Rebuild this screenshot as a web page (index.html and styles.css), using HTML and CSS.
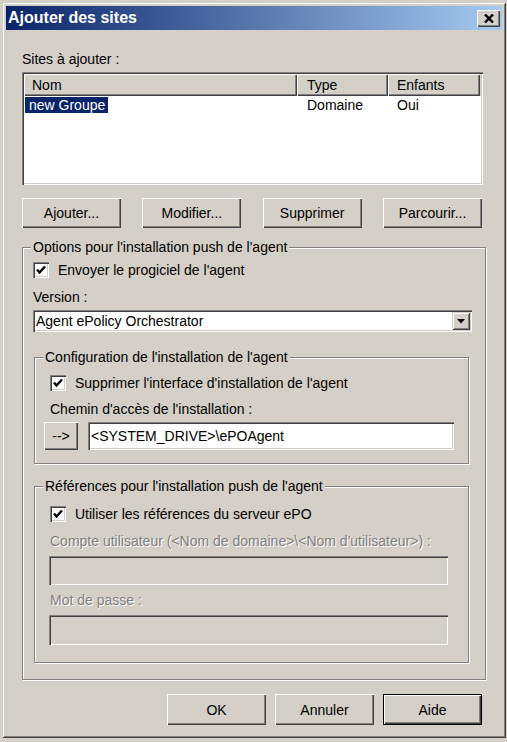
FILE: index.html
```html
<!DOCTYPE html>
<html lang="fr">
<head>
<meta charset="utf-8">
<title>Ajouter des sites</title>
<link rel="stylesheet" href="styles.css">
</head>
<body>
<div class="window">
  <div class="titlebar">
    <span class="title">Ajouter des sites</span>
    <span class="close-btn">
      <svg width="10" height="9" viewBox="0 0 10 9"><path d="M1 0.5 L9 8.5 M9 0.5 L1 8.5" stroke="#000" stroke-width="2.4" fill="none"/></svg>
    </span>
  </div>
  <div class="content">
    <div class="label top-label">Sites à ajouter :</div>
    <div class="listview">
      <div class="lv-header">
        <div class="hcell c-nom">Nom</div>
        <div class="hcell c-type">Type</div>
        <div class="hcell c-enf">Enfants</div>
        <div class="hfill"></div>
      </div>
      <div class="lv-row">
        <div class="cell c-nom"><span class="selected">new Groupe</span></div>
        <div class="cell c-type">Domaine</div>
        <div class="cell c-enf">Oui</div>
      </div>
    </div>
    <div class="btn-row">
      <div class="btn">Ajouter...</div>
      <div class="btn">Modifier...</div>
      <div class="btn">Supprimer</div>
      <div class="btn">Parcourir...</div>
    </div>

    <div class="group g-main">
      <span class="legend">Options pour l'installation push de l'agent</span>
      <div class="check-row cr-main">
        <span class="checkbox"><svg width="16" height="16" viewBox="0 0 16 16"><path d="M4 7.5 L6.5 10.5 L12 4.5" stroke="#000" stroke-width="2.4" fill="none"/></svg></span>
        <span>Envoyer le progiciel de l'agent</span>
      </div>
      <div class="label l-version">Version :</div>
      <div class="combo">
        <span class="combo-text">Agent ePolicy Orchestrator</span>
        <span class="combo-btn"><svg width="8" height="5" viewBox="0 0 8 5"><path d="M0 0 H8 L4 4.5 Z" fill="#000"/></svg></span>
      </div>

      <div class="group g-sub g-config">
        <span class="legend">Configuration de l'installation de l'agent</span>
        <div class="check-row cr-sub">
          <span class="checkbox"><svg width="16" height="16" viewBox="0 0 16 16"><path d="M4 7.5 L6.5 10.5 L12 4.5" stroke="#000" stroke-width="2.4" fill="none"/></svg></span>
          <span>Supprimer l'interface d'installation de l'agent</span>
        </div>
        <div class="label l-sub l-chemin">Chemin d'accès de l'installation :</div>
        <div class="path-row">
          <div class="btn btn-arrow">--&gt;</div>
          <div class="textbox path-box">&lt;SYSTEM_DRIVE&gt;\ePOAgent</div>
        </div>
      </div>

      <div class="group g-sub g-refs">
        <span class="legend">Références pour l'installation push de l'agent</span>
        <div class="check-row cr-refs">
          <span class="checkbox"><svg width="16" height="16" viewBox="0 0 16 16"><path d="M4 7.5 L6.5 10.5 L12 4.5" stroke="#000" stroke-width="2.4" fill="none"/></svg></span>
          <span>Utiliser les références du serveur ePO</span>
        </div>
        <div class="label l-sub disabled l-compte">Compte utilisateur (&lt;Nom de domaine&gt;\&lt;Nom d'utilisateur&gt;) :</div>
        <div class="textbox disabled-box box-compte"></div>
        <div class="label l-sub disabled l-mdp">Mot de passe :</div>
        <div class="textbox disabled-box box-mdp"></div>
      </div>
    </div>

    <div class="footer">
      <div class="btn btn-foot">OK</div>
      <div class="btn btn-foot">Annuler</div>
      <div class="btn btn-foot btn-default">Aide</div>
    </div>
  </div>
</div>
</body>
</html>
```
FILE: styles.css
```css
* { box-sizing: border-box; }
html, body { margin: 0; padding: 0; }
body {
  width: 507px;
  height: 742px;
  background: #d4d0c8;
  padding: 2px 1px 4px 2px;
  font-family: "Liberation Sans", Arial, sans-serif;
  font-size: 14px;
  color: #000;
  overflow: hidden;
}
.window {
  width: 504px;
  height: 736px;
  background: #d4d0c8;
  padding: 4px;
  box-shadow: inset 1px 1px #d4d0c8, inset -1px -1px #404040, inset 2px 2px #ffffff, inset -2px -2px #808080;
}
.titlebar {
  height: 24px;
  display: flex;
  align-items: center;
  justify-content: space-between;
  padding: 0 2px 0 2px;
  background: linear-gradient(to right, #0a246a, #a6caf0);
}
.title {
  color: #fff;
  font-weight: bold;
  font-size: 16px;
  line-height: 18px;
}
.close-btn {
  width: 23px;
  height: 17px;
  background: #d4d0c8;
  display: flex;
  align-items: center;
  justify-content: center;
  box-shadow: inset 1px 1px #ffffff, inset -1px -1px #404040, inset -2px -2px #808080;
}
.content {
  padding-left: 16px;
}
.label {
  line-height: 16px;
  height: 16px;
  white-space: nowrap;
}
.top-label { margin-top: 21px; }
.listview {
  margin-top: 5px;
  width: 461px;
  height: 113px;
  background: #fff;
  padding: 2px;
  box-shadow: inset 1px 1px #808080, inset 2px 2px #404040, inset -1px -1px #ffffff, inset -2px -2px #d4d0c8;
}
.lv-header {
  display: flex;
  height: 22px;
  background: #d4d0c8;
}
.hcell {
  height: 22px;
  line-height: 22px;
  padding-left: 8px;
  box-shadow: inset 1px 1px #ffffff, inset -1px -1px #404040, inset -2px -2px #808080;
}
.c-nom { width: 273px; }
.c-type { width: 91px; padding-left: 10px; }
.c-enf { width: 92px; padding-left: 9px; }
.hfill { flex: 1; }
.lv-row {
  display: flex;
  height: 16px;
  margin-top: 1px;
  line-height: 16px;
}
.cell { white-space: nowrap; }
.lv-row .c-nom { padding-left: 1px; }
.selected {
  display: inline-block;
  background: #0a246a;
  color: #fff;
  padding: 0 3px 0 4px;
  height: 16px;
}
.btn-row {
  margin-top: 13px;
  width: 460px;
  display: flex;
  justify-content: space-between;
}
.btn {
  width: 99px;
  height: 30px;
  display: flex;
  align-items: center;
  justify-content: center;
  background: #d4d0c8;
  box-shadow: inset 1px 1px #ffffff, inset -1px -1px #404040, inset -2px -2px #808080;
  white-space: nowrap;
}
.group {
  position: relative;
  border: 1px solid #808080;
  box-shadow: inset 1px 1px #ffffff, 1px 1px #ffffff;
}
.legend {
  position: absolute;
  top: -9px;
  left: 8px;
  line-height: 16px;
  padding: 0 2px;
  background: #d4d0c8;
  white-space: nowrap;
}
.g-main {
  margin-top: 19px;
  width: 464px;
  height: 433px;
  padding-left: 10px;
}
.check-row {
  display: flex;
  align-items: center;
  height: 16px;
  line-height: 16px;
  white-space: nowrap;
}
.checkbox {
  width: 16px;
  height: 16px;
  margin-right: 9px;
  background: #fff;
  box-shadow: inset 1px 1px #808080, inset 2px 2px #404040, inset -1px -1px #ffffff, inset -2px -2px #d4d0c8;
  display: flex;
}
.cr-main { margin-top: 14px; }
.l-version { margin-top: 11px; }
.combo {
  margin-top: 5px;
  width: 439px;
  height: 22px;
  background: #fff;
  padding: 2px;
  display: flex;
  align-items: center;
  justify-content: space-between;
  box-shadow: inset 1px 1px #808080, inset 2px 2px #404040, inset -1px -1px #ffffff, inset -2px -2px #d4d0c8;
}
.combo-text { padding-left: 1px; line-height: 16px; white-space: nowrap; }
.combo-btn {
  width: 18px;
  height: 18px;
  background: #d4d0c8;
  display: flex;
  align-items: center;
  justify-content: center;
  box-shadow: inset 1px 1px #d4d0c8, inset -1px -1px #404040, inset 2px 2px #ffffff, inset -2px -2px #808080;
}
.g-sub {
  width: 435px;
  margin-left: 1px;
  padding-left: 15px;
}
.g-config {
  margin-top: 25px;
  height: 107px;
}
.cr-sub { margin-top: 17px; }
.l-chemin { margin-top: 10px; }
.path-row {
  margin-top: 5px;
  display: flex;
  margin-left: -6px;
}
.btn-arrow {
  width: 34px;
  height: 28px;
  margin-right: 10px;
}
.textbox {
  background: #fff;
  padding: 2px 4px;
  line-height: 24px;
  white-space: nowrap;
  box-shadow: inset 1px 1px #808080, inset 2px 2px #404040, inset -1px -1px #ffffff, inset -2px -2px #d4d0c8;
}
.path-box {
  width: 366px;
  height: 28px;
  padding-left: 3px;
}
.g-refs {
  margin-top: 22px;
  height: 177px;
}
.cr-refs { margin-top: 19px; }
.disabled {
  color: #808080;
  text-shadow: 1px 1px #ffffff;
}
.l-compte { margin-top: 11px; }
.disabled-box {
  background: #d4d0c8;
  width: 399px;
  margin-left: -1px;
}
.box-compte { margin-top: 7px; height: 29px; }
.l-mdp { margin-top: 7px; }
.box-mdp { margin-top: 7px; height: 30px; }
.footer {
  margin-top: 14px;
  width: 460px;
  display: flex;
  justify-content: flex-end;
  gap: 9px;
}
.btn-foot { height: 31px; }
.btn-default {
  border: 1px solid #000;
  box-shadow: inset 1px 1px #ffffff, inset -1px -1px #404040, inset -2px -2px #808080;
}
```
